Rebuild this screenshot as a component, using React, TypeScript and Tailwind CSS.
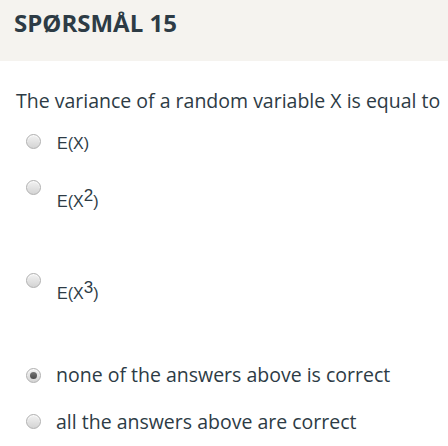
import React from 'react';

const openSans = { fontFamily: '"Open Sans", "Liberation Sans", sans-serif' };

function Radio({ checked = false }: { checked?: boolean }) {
  return (
    <span className="flex h-[15px] w-[15px] shrink-0 items-center justify-center rounded-full border border-[#b0b0b0] bg-gradient-to-b from-[#f2f2f2] to-[#d4d4d4] shadow-[inset_0_1px_1px_rgba(255,255,255,0.8)]">
      {checked && <span className="h-[7px] w-[7px] rounded-full bg-gradient-to-b from-[#777] to-[#4a4a4a]" />}
    </span>
  );
}

function MathLabel({ power }: { power?: string }) {
  return (
    <span className="font-['Liberation_Sans',Arial,sans-serif] text-[16px] leading-[16px] text-[#2d3b45]">
      E(X{power && <span className="relative -top-[6px] text-[17px]">{power}</span>})
    </span>
  );
}

export default function App() {
  return (
    <div className="h-[446px] w-[448px] overflow-hidden bg-white text-[#2d3b45]" style={openSans}>
      {/* header */}
      <div className="h-[61px] bg-[#f5f3ef] pl-[14px] pt-[8px]">
        <h2 className="text-[24px] font-bold leading-[30px]">SPØRSMÅL 15</h2>
      </div>

      <div className="pl-[16px] pt-[27px]">
        <p className="whitespace-nowrap text-[19.5px] leading-[26px]">The variance of a random variable X is equal to</p>

        <div className="mt-[13px] flex flex-col">
          <div className="flex h-[30px] items-start pl-[10px]">
            <span className="mt-[7px]"><Radio /></span>
            <span className="ml-[16px] mt-[4px]"><MathLabel /></span>
          </div>

          <div className="mt-[20px] flex h-[30px] items-start pl-[10px]">
            <span className="mt-[3px]"><Radio /></span>
            <span className="ml-[16px] mt-[12px]"><MathLabel power="2" /></span>
          </div>

          <div className="mt-[63px] flex h-[30px] items-start pl-[10px]">
            <span className="mt-[3px]"><Radio /></span>
            <span className="ml-[16px] mt-[11px]"><MathLabel power="3" /></span>
          </div>

          <div className="mt-[60px] flex h-[30px] items-center pl-[10px]">
            <Radio checked />
            <span className="ml-[15px] whitespace-nowrap text-[19.5px] leading-[26px]">none of the answers above is correct</span>
          </div>

          <div className="mt-[16px] flex h-[30px] items-center pl-[10px]">
            <Radio />
            <span className="ml-[15px] mt-[2px] whitespace-nowrap text-[19.5px] leading-[26px]">all the answers above are correct</span>
          </div>
        </div>
      </div>
    </div>
  );
}
